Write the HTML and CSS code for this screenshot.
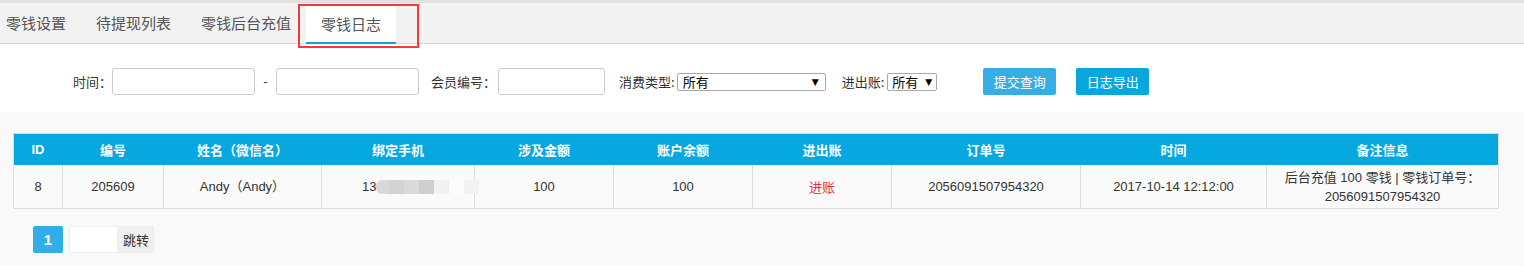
FILE: index.html
```html
<!DOCTYPE html>
<html lang="zh-CN">
<head>
<meta charset="utf-8">
<title>零钱日志</title>
<link rel="stylesheet" href="styles.css">
</head>
<body>
<div class="tabs">
  <a class="tab">零钱设置</a>
  <a class="tab">待提现列表</a>
  <a class="tab">零钱后台充值</a>
  <a class="tab active">零钱日志</a>
</div>
<div class="mark"></div>

<form class="filter">
  <label class="lbl lbl-time">时间：</label>
  <input class="inp inp-date" type="text">
  <span class="dash">-</span>
  <input class="inp inp-date" type="text">
  <label class="lbl lbl-member">会员编号：</label>
  <input class="inp inp-member" type="text">
  <label class="lbl lbl-type">消费类型:</label>
  <div class="sel sel-type"><span>所有</span><span class="arrow">▼</span></div>
  <label class="lbl lbl-io">进出账:</label>
  <div class="sel sel-io"><span>所有</span><span class="arrow">▼</span></div>
  <button type="button" class="btn btn-query">提交查询</button>
  <button type="button" class="btn btn-export">日志导出</button>
</form>

<div class="content">
  <table class="log">
    <colgroup>
      <col class="c-id"><col class="c-no"><col class="c-name"><col class="c-phone"><col class="c-amt">
      <col class="c-bal"><col class="c-io"><col class="c-order"><col class="c-time"><col class="c-note">
    </colgroup>
    <thead>
      <tr>
        <th>ID</th><th>编号</th><th>姓名（微信名）</th><th>绑定手机</th><th>涉及金额</th>
        <th>账户余额</th><th>进出账</th><th>订单号</th><th>时间</th><th>备注信息</th>
      </tr>
    </thead>
    <tbody>
      <tr>
        <td>8</td>
        <td>205609</td>
        <td>Andy（Andy）</td>
        <td class="phone">13<span class="blur"><i class="b1"></i><i class="b2"></i><i class="b3"></i><i class="b4"></i><i class="b5"></i><i class="b6"></i><i class="b7"></i></span></td>
        <td>100</td>
        <td>100</td>
        <td class="in">进账</td>
        <td>2056091507954320</td>
        <td>2017-10-14 12:12:00</td>
        <td class="note">后台充值 100 零钱 | 零钱订单号：<br>2056091507954320</td>
      </tr>
    </tbody>
  </table>

  <div class="pager">
    <span class="page-cur">1</span>
    <div class="jump"><input class="jump-inp" type="text"><span class="jump-btn">跳转</span></div>
  </div>
</div>
</body>
</html>
```

FILE: styles.css
```css
* { box-sizing: border-box; }

html, body {
  margin: 0;
  padding: 0;
}

body {
  position: relative;
  width: 1524px;
  min-height: 266px;
  background: #f9f9f9;
  font-family: "Liberation Sans", "Noto Sans CJK SC", sans-serif;
  font-size: 13px;
  color: #333;
}

/* tabs */
.tabs {
  display: flex;
  height: 44px;
  padding-left: 6px;
  background: #f2f2f2;
  border-top: 3px solid #e2e2e2;
  border-bottom: 1px solid #d6d6d6;
}

.tab {
  position: relative;
  display: block;
  padding: 0 15px;
  line-height: 39px;
  font-family: "Noto Sans CJK SC", sans-serif;
  font-size: 15px;
  color: #555;
  cursor: pointer;
}

.tab:first-child { padding-left: 0; }

.tab.active {
  margin-top: 2px;
  line-height: 37px;
  height: 38px;
  background: #fff;
}

.tab.active::after {
  content: "";
  position: absolute;
  left: 0;
  right: 0;
  bottom: -1px;
  height: 2px;
  background: #1a9fd9;
}

.mark {
  position: absolute;
  left: 298px;
  top: 4px;
  width: 121px;
  height: 44px;
  border: 2px solid #f43a3a;
  pointer-events: none;
}

/* filter */
.filter {
  display: flex;
  align-items: center;
  height: 68px;
  padding: 7px 0 0 73px;
  margin: 0;
  background: #fff;
}

.lbl {
  font-family: "Noto Sans CJK SC", sans-serif;
  font-size: 13px;
  color: #333;
  white-space: nowrap;
}

.lbl-member { margin-left: 12px; margin-right: 2px; }
.lbl-type { margin-left: 14px; margin-right: 2px; }
.lbl-io { margin-left: 16px; margin-right: 3px; }

.inp {
  height: 27px;
  border: 1px solid #ccc;
  border-radius: 3px;
  background: #fff;
  padding: 0 6px;
  font: inherit;
  outline: none;
}

.inp-date { width: 143px; }
.inp-member { width: 107px; }

.dash {
  width: 21px;
  text-align: center;
}

.sel {
  display: flex;
  align-items: center;
  justify-content: space-between;
  height: 18px;
  padding: 0 6px 0 5px;
  border: 1px solid #a9a9a9;
  border-radius: 2px;
  background: #fff;
  font-family: "Noto Sans CJK SC", sans-serif;
  font-size: 13px;
  color: #000;
  line-height: 16px;
}

.sel .arrow {
  font-family: "DejaVu Sans", sans-serif;
  font-size: 9px;
  color: #000;
}

.sel-type { width: 149px; }
.sel-io { width: 50px; padding-left: 4px; padding-right: 4px; }

.btn {
  width: 73px;
  height: 27px;
  border: 0;
  border-radius: 2px;
  color: #fff;
  font-family: "Noto Sans CJK SC", sans-serif;
  font-size: 13px;
  padding: 0;
  cursor: pointer;
}

.btn-query { margin-left: 46px; background: #35aee6; }
.btn-export { margin-left: 20px; background: #0aa7df; }

/* table */
.content {
  padding: 21px 0 0 13px;
}

.log {
  width: 1486px;
  table-layout: fixed;
  border-collapse: separate;
  border-spacing: 0;
  border: 1px solid #ddd;
  background: #fafafa;
}

.c-id { width: 48px; }
.c-no { width: 101px; }
.c-name { width: 158px; }
.c-phone { width: 153px; }
.c-amt { width: 139px; }
.c-bal { width: 139px; }
.c-io { width: 139px; }
.c-order { width: 189px; }
.c-time { width: 186px; }
.c-note { width: 232px; }

.log th {
  height: 31px;
  padding: 0;
  background: #07a7df;
  color: #fff;
  font-family: "Liberation Sans", "Noto Sans CJK SC", sans-serif;
  font-size: 13px;
  font-weight: bold;
  text-align: center;
  border-left: 1px solid #07a7df;
}

.log th:first-child { border-left: 0; }

.log td {
  height: 43px;
  padding: 0 4px;
  text-align: center;
  font-size: 13px;
  color: #333;
  line-height: 19px;
  border-left: 1px solid #ddd;
}

.log td:first-child { border-left: 0; }

.log td.in { color: #d9304a; font-family: "Noto Sans CJK SC", sans-serif; }

.log td.phone {
  text-align: left;
  padding-left: 40px;
  white-space: nowrap;
}

.blur {
  display: inline-flex;
  vertical-align: -3px;
  height: 14px;
}

.blur i {
  display: block;
  flex: none;
  width: 15px;
  height: 14px;
}

.blur .b1 { width: 13px; background: #d9d9d9; border-radius: 6px 0 0 6px; }
.blur .b2 { background: #d3d3d3; }
.blur .b3 { background: #dadada; }
.blur .b4 { background: #cfcfcf; }
.blur .b5 { background: #f1f1f1; }
.blur .b6 { background: #fcfcfc; }
.blur .b7 { background: #f3f3f3; }

.log td.note { line-height: 19px; }

/* pager */
.pager {
  display: flex;
  align-items: center;
  margin-top: 17px;
  padding-left: 20px;
}

.page-cur {
  display: flex;
  align-items: center;
  justify-content: center;
  width: 30px;
  height: 27px;
  border-radius: 2px;
  background: #2faee9;
  color: #fff;
  font-weight: bold;
  font-size: 15px;
}

.jump {
  display: flex;
  margin-left: 6px;
  height: 27px;
  border: 1px solid #efefef;
  background: #efefef;
}

.jump-inp {
  width: 47px;
  height: 25px;
  border: 0;
  background: #fff;
  outline: none;
  padding: 0 4px;
}

.jump-btn {
  display: flex;
  align-items: center;
  padding: 0 4px 0 6px;
  font-family: "Noto Sans CJK SC", sans-serif;
  font-size: 13px;
  color: #333;
}
```
